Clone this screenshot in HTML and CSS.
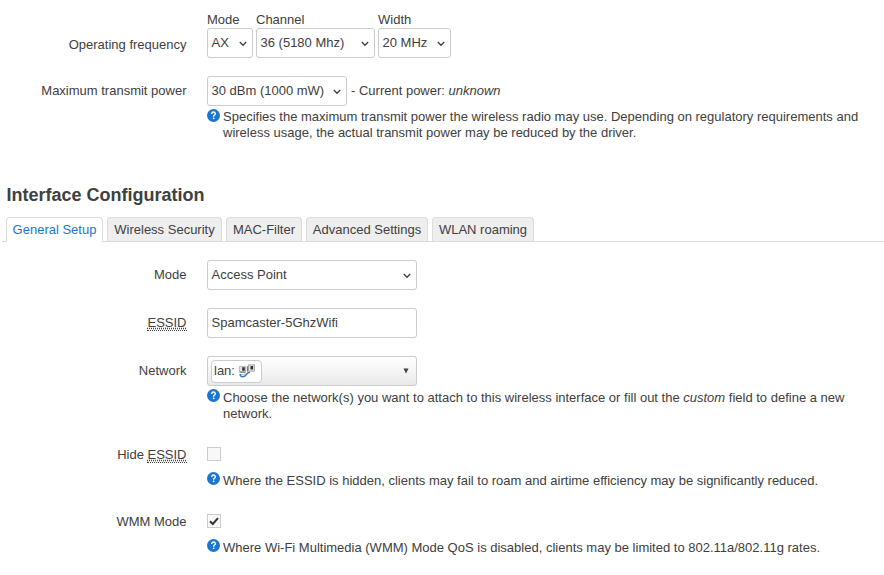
FILE: index.html
```
<!DOCTYPE html>
<html lang="en">
<head>
<meta charset="utf-8">
<title>Wireless</title>
<link rel="stylesheet" href="styles.css">
</head>
<body>
<svg class="defs" width="0" height="0">
  <symbol id="chev" viewBox="0 0 8 6"><path d="M.8 1 4 4.3 7.2 1" fill="none" stroke="#404040" stroke-width="1.3"/></symbol>
  <symbol id="help" viewBox="0 0 13 13"><circle cx="6.5" cy="6.5" r="6.5" fill="#1976d2"/><path d="M4.7 5V4.6Q4.9 3 6.5 3T8.4 4.7Q8.4 5.5 7.4 6.1 6.6 6.6 6.6 7.7" fill="none" stroke="#fff" stroke-width="1.4"/><path d="M5.8 8.6h1.6v1.5H5.8z" fill="#fff"/></symbol>
</svg>
<section class="radio">
  <div class="row freq">
    <div class="label">Operating frequency</div>
    <div class="field group">
      <div class="w-mode"><div class="caption">Mode</div><div class="control">AX<svg class="chev"><use href="#chev"/></svg></div></div>
      <div class="w-channel"><div class="caption">Channel</div><div class="control">36 (5180 Mhz)<svg class="chev"><use href="#chev"/></svg></div></div>
      <div class="w-width"><div class="caption">Width</div><div class="control">20 MHz<svg class="chev"><use href="#chev"/></svg></div></div>
    </div>
  </div>
  <div class="row power">
    <div class="label">Maximum transmit power</div>
    <div class="field">
      <div class="inline"><div class="control w-power">30 dBm (1000 mW)<svg class="chev"><use href="#chev"/></svg></div><span>- Current power: <em>unknown</em></span></div>
      <div class="help"><svg class="q"><use href="#help"/></svg><p>Specifies the maximum transmit power the wireless radio may use. Depending on regulatory requirements and<br>wireless usage, the actual transmit power may be reduced by the driver.</p></div>
    </div>
  </div>
</section>
<h3>Interface Configuration</h3>
<ul class="tabs">
  <li class="active t1">General Setup</li>
  <li class="t2">Wireless Security</li>
  <li class="t3">MAC-Filter</li>
  <li class="t4">Advanced Settings</li>
  <li class="t5">WLAN roaming</li>
</ul>
<section>
  <div class="row">
    <div class="label">Mode</div>
    <div class="field"><div class="control wide">Access Point<svg class="chev"><use href="#chev"/></svg></div></div>
  </div>
  <div class="row">
    <div class="label"><abbr>ESSID</abbr></div>
    <div class="field"><div class="control wide">Spamcaster-5GhzWifi</div></div>
  </div>
  <div class="row">
    <div class="label">Network</div>
    <div class="field">
      <div class="control wide dropdown">
        <div class="badge">lan:
          <svg width="16" height="14" viewBox="0 0 16 14"><path d="M.5 2.5h6v6h-6z" fill="#e4e4e4" stroke="#bbb"/><path d="M9.5.8h6v6.4h-6z" fill="#e4e4e4" stroke="#aaa"/><path d="M3.2 3.2h2.6v3.6H3.2zM11.5 2h2.6v3.6h-2.6z" fill="#333"/><path d="M1 7.5h5v1H1zM7.8 2.2h1.3v5.2H7.8z" fill="#777"/><path d="M1.2 9.8Q.8 12.7 4 12.7 6 12.7 7.3 10.6T11 8.3" fill="none" stroke="#3975bd" stroke-width="1.5"/><path d="M2 10.5Q4.5 11.5 6.5 9.5" fill="none" stroke="#9abce2"/></svg>
        </div>
        <svg class="tri" width="6" height="6" viewBox="0 0 6 6"><path d="M.5.5h5L3 5.5z" fill="#404040"/></svg>
      </div>
      <div class="help net"><svg class="q"><use href="#help"/></svg><p>Choose the network(s) you want to attach to this wireless interface or fill out the <em>custom</em> field to define a new<br>network.</p></div>
    </div>
  </div>
  <div class="row check first">
    <div class="label">Hide <abbr>ESSID</abbr></div>
    <div class="field"><div class="box"></div>
      <div class="help"><svg class="q"><use href="#help"/></svg><p>Where the ESSID is hidden, clients may fail to roam and airtime efficiency may be significantly reduced.</p></div>
    </div>
  </div>
  <div class="row check">
    <div class="label">WMM Mode</div>
    <div class="field"><div class="box"><svg width="10" height="9" viewBox="0 0 10 9"><path d="M1 4.3 3.8 7 9 1.2" fill="none" stroke="#333" stroke-width="2"/></svg></div>
      <div class="help"><svg class="q"><use href="#help"/></svg><p>Where Wi-Fi Multimedia (WMM) Mode QoS is disabled, clients may be limited to 802.11a/802.11g rates.</p></div>
    </div>
  </div>
</section>
</body>
</html>
```
FILE: styles.css
```
* { box-sizing: border-box; }
body { margin: 0; height: 575px; overflow: hidden; background: #fff; color: #404040; font: 13px/16px "Liberation Sans", Arial, sans-serif; }
.defs { display: block; }
p { margin: 0; white-space: nowrap; }
.radio { padding-top: 12px; height: 185px; }
.row { display: flex; margin-bottom: 18px; }
.label { width: 186.5px; margin-right: 20.5px; padding-top: 7px; text-align: right; flex: none; }
.freq .label { padding-top: 25px; }
.group { display: flex; gap: 3px; }
.caption { height: 16px; line-height: 15px; }
.control { display: flex; align-items: center; justify-content: space-between; height: 30px; padding: 0 5px 0 3.5px; border: 1px solid #ccc; border-radius: 3px; background: #fff; white-space: nowrap; }
.chev { width: 8px; height: 6px; margin-top: 1px; flex: none; }
.w-mode { width: 46px; }
.w-channel { width: 119px; }
.w-width { width: 73px; }
.w-power { width: 140px; }
.wide { width: 210px; }
.inline { display: flex; align-items: center; gap: 4px; }
.help { display: flex; gap: 3px; padding-top: 3px; }
.help.net { padding-top: 4px; }
.q { width: 13px; height: 13px; flex: none; }
.net .q { margin-top: -1px; }
h3 { margin: 0 0 7px 6.5px; height: 25px; font-size: 18px; line-height: 20px; }
.tabs { display: flex; gap: 4px; height: 25px; margin: 0 0 18px 2px; padding: 0 0 0 4px; list-style: none; border-bottom: 1px solid #ddd; }
.tabs li { height: 24px; padding-top: 4px; border: 1px solid #ddd; border-bottom: 0; border-radius: 4px 4px 0 0; background: #eee; text-align: center; white-space: nowrap; }
.tabs .active { height: 25px; background: #fff; color: #1976d2; }
.t1 { width: 97px; }
.t2 { width: 115px; }
.t3 { width: 76px; }
.t4 { width: 122px; }
.t5 { width: 102px; }
abbr { border-bottom: 1px dotted #404040; text-decoration: underline dotted; }
.dropdown { padding: 0 7px 0 3px; background: linear-gradient(#fff, #e9e9e9); }
.badge { display: flex; align-items: center; gap: 4px; width: 51px; height: 23px; padding: 0 0 1px 2px; border: 1px solid #ccc; border-radius: 4px; background: #fff; }
.check { margin-bottom: 26px; }
.check.first { margin-top: 25px; }
.check .label { padding-top: 0; }
.box { display: flex; align-items: center; justify-content: center; width: 14px; height: 14px; border: 1px solid #ccc; background: #f8f8f8; }
.check .help { padding-top: 12px; }
.check + .check { margin-top: -1px; }
.check .q { margin-top: -1px; }
```
